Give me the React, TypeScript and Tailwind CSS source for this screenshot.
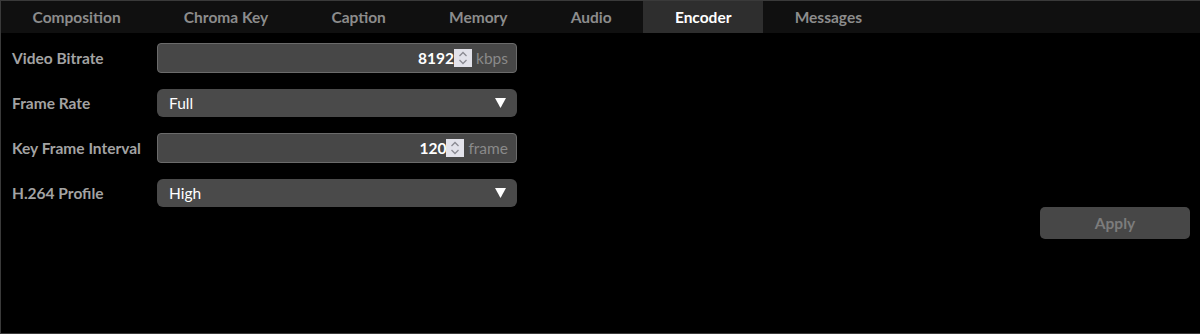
import React from 'react';

const tabs = ['Composition', 'Chroma Key', 'Caption', 'Memory', 'Audio', 'Encoder', 'Messages'];

const font = { fontFamily: '"Lato", "Noto Sans", sans-serif' };

function Spin() {
  return (
    <span className="flex h-[18px] w-[18px] items-center justify-center bg-[#e2e2ea]">
      <svg width="12" height="16" viewBox="0 0 12 16" fill="none" stroke="#8a8a92" strokeWidth="1.3">
        <path d="M2.5 6 L6 2.5 L9.5 6" />
        <path d="M2.5 10 L6 13.5 L9.5 10" />
      </svg>
    </span>
  );
}

function SpinField({ value, unit }: { value: string; unit: string }) {
  return (
    <div className="flex h-[30px] w-[360px] items-center justify-end rounded-[4px] border border-[#6b6b6b] bg-[#474747] pr-[8px]">
      <span className="pt-[1px] text-[15.5px] font-bold text-white">{value}</span>
      <Spin />
      <span className="ml-[4px] pt-[1px] text-[15.5px] text-[#8a8a8a]">{unit}</span>
    </div>
  );
}

function SelectField({ value }: { value: string }) {
  return (
    <div className="flex h-[28px] w-[360px] items-center justify-between rounded-[6px] bg-[#4a4a4a] pl-[12px] pr-[11px]">
      <span className="pt-[1px] text-[15.5px] text-white">{value}</span>
      <svg width="11" height="10" viewBox="0 0 11 10">
        <path d="M0 0 L11 0 L5.5 10 Z" fill="#ffffff" />
      </svg>
    </div>
  );
}

function Row({ label, children }: { label: string; children: React.ReactNode }) {
  return (
    <div className="flex items-center">
      <span className="w-[156px] pl-[11px] pt-[1px] text-[15.5px] font-bold text-[#a3a3a3]">{label}</span>
      {children}
    </div>
  );
}

export default function App() {
  return (
    <div
      className="flex h-[334px] w-[1200px] flex-col border-y border-l border-[#3a3a3a] bg-black"
      style={font}
    >
      <div className="flex h-[32px] shrink-0 bg-[#101010]">
        {tabs.map((tab) => (
          <div
            key={tab}
            className={
              tab === 'Encoder'
                ? 'flex items-center bg-[#2e2e2e] px-[31.6px] pt-[2px] text-[15.5px] font-bold text-white'
                : 'flex items-center px-[31.6px] pt-[2px] text-[15.5px] font-bold text-[#8c8c8c]'
            }
          >
            {tab}
          </div>
        ))}
      </div>
      <div className="flex flex-col gap-4 pt-[10px]">
        <Row label="Video Bitrate">
          <SpinField value="8192" unit="kbps" />
        </Row>
        <Row label="Frame Rate">
          <SelectField value="Full" />
        </Row>
        <Row label="Key Frame Interval">
          <SpinField value="120" unit="frame" />
        </Row>
        <Row label="H.264 Profile">
          <SelectField value="High" />
        </Row>
      </div>
      <div className="flex justify-end pr-[10px]">
        <button className="h-[32px] w-[150px] rounded-[5px] bg-[#474747] pt-[1px] text-[15.5px] font-bold text-[#7c7c7c]">
          Apply
        </button>
      </div>
    </div>
  );
}
